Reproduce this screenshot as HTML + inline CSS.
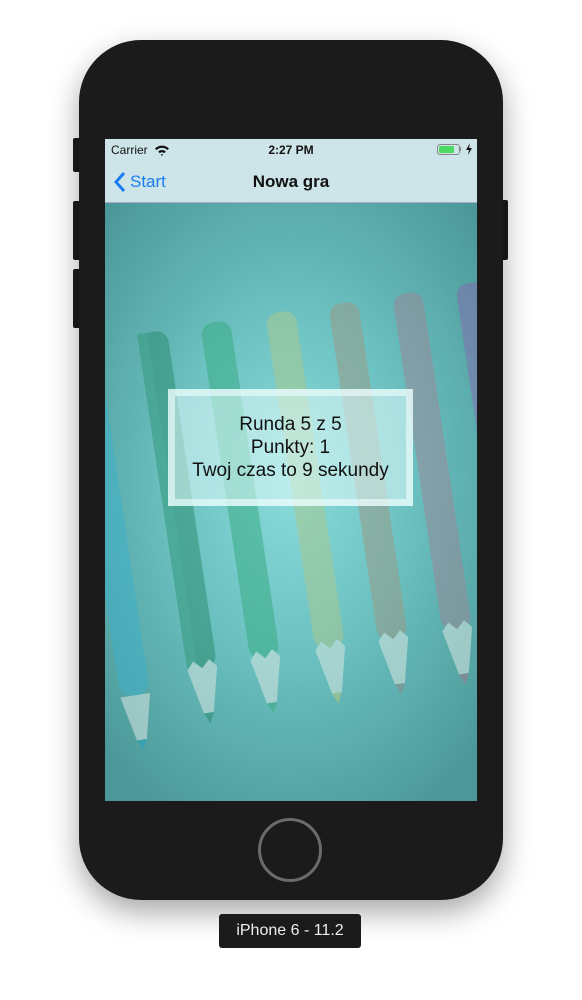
<!DOCTYPE html>
<html><head><meta charset="utf-8"><style>
html,body{margin:0;padding:0;width:582px;height:1000px;background:#fff;overflow:hidden;font-family:"Liberation Sans",sans-serif}
.phone{position:absolute;left:79px;top:40px;width:424px;height:860px;background:#1b1b1b;border-radius:62px;box-shadow:0 12px 30px rgba(0,0,0,.35)}
.btn{position:absolute;background:#1b1b1b;border-radius:2px}
.screen{position:absolute;left:105px;top:139px;width:372px;height:662px;overflow:hidden;background:radial-gradient(ellipse 260px 380px at 50% 52%,#8adcdb 0%,#6cc1c1 45%,#4c9898 100%)}
.bar{position:absolute;left:0;top:0;width:372px;height:63px;background:#cde5e8;border-bottom:1px solid #aac}
.home{position:absolute;left:258px;top:818px;border:3px solid #6b6b6b;border-radius:50%;box-sizing:border-box;width:64px;height:64px}
.lbl{position:absolute;left:219px;top:914px;width:142px;height:34px;background:#1b1b1b;border-radius:3px;color:#eee;font-size:16px;text-align:center;line-height:34px}
.box{position:absolute;left:63px;top:250px;width:245px;height:117px;background:rgba(225,250,250,.55);box-sizing:border-box;border:7px solid rgba(240,255,255,.6)}
.box div{text-align:center;font-size:19px;color:#111;line-height:23px}
</style></head><body>
<div class="btn" style="left:73px;top:138px;width:8px;height:34px"></div>
<div class="btn" style="left:73px;top:201px;width:8px;height:59px"></div>
<div class="btn" style="left:73px;top:269px;width:8px;height:59px"></div>
<div class="btn" style="left:500px;top:200px;width:8px;height:60px"></div>
<div class="phone"></div>
<div class="screen">
<svg width="372" height="662" style="position:absolute;left:0;top:0">
<g opacity="0.55">
<g transform="translate(-20,220) rotate(-8.5)"><rect x="-15" y="0" width="30" height="340" rx="12" fill="#3fb0c8"/><polygon points="-15,340 15,340 5,385 -5,385" fill="#d8e6e0"/><polygon points="-5,385 5,385 0,396" fill="#2aa0c0"/></g>
<g transform="translate(47,193) rotate(-8.5)"><rect x="-15" y="0" width="30" height="340" rx="12" fill="#2e8f72"/><rect x="-15" y="0" width="10" height="340" fill="#359a7c"/><polygon points="-15,340 -8,332 0,340 8,332 15,340 5,385 -5,385" fill="#d8e6e0"/><polygon points="-5,385 5,385 0,396" fill="#2e8f72"/></g>
<g transform="translate(110,183) rotate(-8.5)"><rect x="-15" y="0" width="30" height="340" rx="12" fill="#3aad84"/><polygon points="-15,340 -8,332 0,340 8,332 15,340 5,385 -5,385" fill="#d8e6e0"/><polygon points="-5,385 5,385 0,396" fill="#3aad84"/></g>
<g transform="translate(175,173) rotate(-8.5)"><rect x="-15" y="0" width="30" height="340" rx="12" fill="#a8c890"/><polygon points="-15,340 -8,332 0,340 8,332 15,340 5,385 -5,385" fill="#d8e6e0"/><polygon points="-5,385 5,385 0,396" fill="#b8c880"/></g>
<g transform="translate(238,164) rotate(-8.5)"><rect x="-15" y="0" width="30" height="340" rx="12" fill="#9a9c88"/><polygon points="-15,340 -8,332 0,340 8,332 15,340 5,385 -5,385" fill="#d8e6e0"/><polygon points="-5,385 5,385 0,396" fill="#908a88"/></g>
<g transform="translate(302,154) rotate(-8.5)"><rect x="-15" y="0" width="30" height="340" rx="12" fill="#988a98"/><polygon points="-15,340 -8,332 0,340 8,332 15,340 5,385 -5,385" fill="#d8e6e0"/><polygon points="-5,385 5,385 0,396" fill="#a07890"/></g>
<g transform="translate(365,144) rotate(-8.5)"><rect x="-15" y="0" width="30" height="340" rx="12" fill="#8070b0"/></g>
</g>
</svg>
<div class="bar">
<div style="position:absolute;left:6px;top:4px;font-size:12px;color:#111">Carrier</div>
<svg style="position:absolute;left:49px;top:5px" width="16" height="12" viewBox="0 0 16 12"><path d="M1 4.5 A10 10 0 0 1 15 4.5 L13.4 6.1 A7.7 7.7 0 0 0 2.6 6.1Z M4.2 7.6 A5.3 5.3 0 0 1 11.8 7.6 L10.2 9.2 A3 3 0 0 0 5.8 9.2Z M8 12 L6.8 10.6 A1.8 1.8 0 0 1 9.2 10.6Z" fill="#111"/></svg>
<div style="position:absolute;left:0;width:372px;top:4px;text-align:center;font-size:12px;font-weight:bold;color:#111">2:27 PM</div>
<div style="position:absolute;left:332px;top:5px;width:21px;height:9px;border:1px solid #888;border-radius:3px"><div style="margin:1px;width:15px;height:7px;background:#4cd964;border-radius:1px"></div></div>
<div style="position:absolute;left:355px;top:8px;width:1px;height:4px;background:#888"></div>
<svg style="position:absolute;left:361px;top:4px" width="6" height="12" viewBox="0 0 6 12"><path d="M4 0 L0 7 L3 7 L2 12 L6 5 L3 5Z" fill="#111"/></svg>
<svg style="position:absolute;left:8px;top:32px" width="14" height="22"><path d="M11 2 L3 11 L11 20" stroke="#1a7cf5" stroke-width="3" fill="none"/></svg>
<div style="position:absolute;left:25px;top:33px;font-size:17px;color:#1a7cf5">Start</div>
<div style="position:absolute;left:0;width:372px;top:33px;text-align:center;font-size:17px;font-weight:bold;color:#111">Nowa gra</div>
</div>
<div class="box"><div style="margin-top:17px">Runda 5 z 5</div><div>Punkty: 1</div><div>Twoj czas to 9 sekundy</div></div>
</div>
<div class="home"></div>
<div class="lbl">iPhone 6 - 11.2</div>
</body></html>
